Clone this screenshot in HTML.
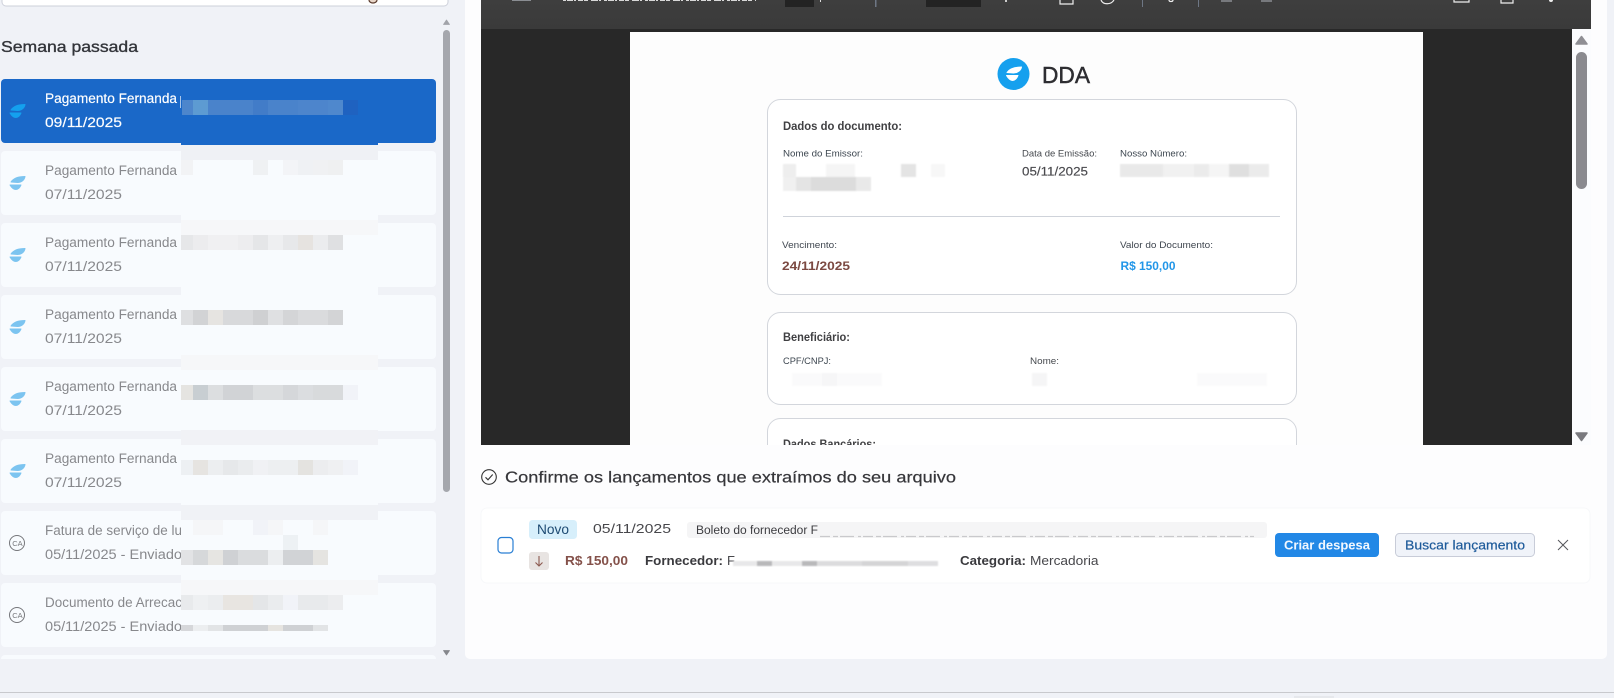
<!DOCTYPE html>
<html lang="pt-BR">
<head>
<meta charset="utf-8">
<title>DDA</title>
<style>
html,body{margin:0;padding:0;width:1614px;height:698px;overflow:hidden;background:#f0f2f7}
svg{display:block}
text{font-family:"Liberation Sans",sans-serif}
.t{font-size:13.5px;fill:#87888c}
</style>
</head>
<body>
<svg width="1614" height="698" viewBox="0 0 1614 698" xmlns="http://www.w3.org/2000/svg">
<defs>
<clipPath id="list"><rect x="0" y="60" width="440" height="599"/></clipPath>
<clipPath id="pdf"><rect x="630" y="32" width="793" height="413"/></clipPath>
<linearGradient id="tb" x1="0" x2="0" y1="0" y2="1"><stop offset="0" stop-color="#3e3e3e"/><stop offset="1" stop-color="#3a3a3a"/></linearGradient>
<filter id="s" x="-2%" y="-2%" width="104%" height="104%"><feGaussianBlur stdDeviation="0.35"/></filter>
<filter id="m" x="-5%" y="-20%" width="110%" height="140%"><feGaussianBlur stdDeviation="0.8"/></filter>
<path id="lu" d="M11 110C13 107 17 104.500 25 104.500C24.500 107.500 22 110.500 17.500 110.500Z" stroke-width="1" stroke-linejoin="round"/>
<path id="ld" d="M10 113H21C20 115.500 18.500 117.500 16 117.500C13.500 117.500 11.500 115.500 10 113Z" stroke-width="1" stroke-linejoin="round"/>
</defs>

<rect width="1614" height="698" fill="#f0f2f7"/>

<!-- search box -->
<rect x="2" y="-10" width="446" height="16" rx="4" fill="#fff" stroke="#cdd0da"/>
<path d="M369 0a4 3 0 0 0 8 0" fill="#e8d6c8" stroke="#5a3a2c" stroke-width="1.2"/>

<text x="1" y="52" font-size="16" fill="#33353a" stroke="#33353a" stroke-width=".35" textLength="137" lengthAdjust="spacingAndGlyphs">Semana passada</text>

<!-- list -->
<g clip-path="url(#list)">
<rect x="1" y="79" width="435" height="64" rx="4" fill="#1a68c8"/>
<rect x="1" y="151" width="435" height="64" rx="4" fill="#f8fbfe"/>
<rect x="1" y="223" width="435" height="64" rx="4" fill="#f8fbfe"/>
<rect x="1" y="295" width="435" height="64" rx="4" fill="#f8fbfe"/>
<rect x="1" y="367" width="435" height="64" rx="4" fill="#f8fbfe"/>
<rect x="1" y="439" width="435" height="64" rx="4" fill="#f8fbfe"/>
<rect x="1" y="511" width="435" height="64" rx="4" fill="#f8fbfe"/>
<rect x="1" y="583" width="435" height="64" rx="4" fill="#f8fbfe"/>
<rect x="1" y="655" width="435" height="64" rx="4" fill="#f8fbfe"/>

<!-- leaf icons -->
<g fill="#14a0ee" stroke="#14a0ee"><use href="#lu"/><use href="#ld"/></g>
<g fill="#7cc4f0" stroke="#7cc4f0">
<use href="#lu" y="72"/><use href="#ld" y="72"/>
<use href="#lu" y="144"/><use href="#ld" y="144"/>
<use href="#lu" y="216"/><use href="#ld" y="216"/>
<use href="#lu" y="288"/><use href="#ld" y="288"/>
<use href="#lu" y="360"/><use href="#ld" y="360"/>
</g>
<g fill="none" stroke="#76777b" stroke-width="1">
<circle cx="17" cy="543" r="7.500"/>
<circle cx="17" cy="615" r="7.500"/>
</g>
<text x="12.200" y="546" font-size="7.500" fill="#76777b">CA</text>
<text x="12.200" y="618" font-size="7.500" fill="#76777b">CA</text>

<!-- item text -->
<text x="45" y="103" font-size="13.500" fill="#fff" stroke="#fff" stroke-width=".15" textLength="132" lengthAdjust="spacingAndGlyphs">Pagamento Fernanda</text>
<text x="45" y="127" font-size="13.500" fill="#fff" stroke="#fff" stroke-width=".15" textLength="77" lengthAdjust="spacingAndGlyphs">09/11/2025</text>
<rect x="180" y="96" width="1" height="12" fill="#a9c6ea"/>
<text class="t" x="45" y="175" textLength="132" lengthAdjust="spacingAndGlyphs">Pagamento Fernanda</text>
<text class="t" x="45" y="199" textLength="77" lengthAdjust="spacingAndGlyphs">07/11/2025</text>
<text class="t" x="45" y="247" textLength="132" lengthAdjust="spacingAndGlyphs">Pagamento Fernanda</text>
<text class="t" x="45" y="271" textLength="77" lengthAdjust="spacingAndGlyphs">07/11/2025</text>
<text class="t" x="45" y="319" textLength="132" lengthAdjust="spacingAndGlyphs">Pagamento Fernanda</text>
<text class="t" x="45" y="343" textLength="77" lengthAdjust="spacingAndGlyphs">07/11/2025</text>
<text class="t" x="45" y="391" textLength="132" lengthAdjust="spacingAndGlyphs">Pagamento Fernanda</text>
<text class="t" x="45" y="415" textLength="77" lengthAdjust="spacingAndGlyphs">07/11/2025</text>
<text class="t" x="45" y="463" textLength="132" lengthAdjust="spacingAndGlyphs">Pagamento Fernanda</text>
<text class="t" x="45" y="487" textLength="77" lengthAdjust="spacingAndGlyphs">07/11/2025</text>
<text class="t" x="45" y="535" textLength="137" lengthAdjust="spacingAndGlyphs">Fatura de serviço de lu</text>
<text class="t" x="45" y="559" textLength="137" lengthAdjust="spacingAndGlyphs">05/11/2025 - Enviado</text>
<text class="t" x="45" y="607" textLength="137" lengthAdjust="spacingAndGlyphs">Documento de Arrecac</text>
<text class="t" x="45" y="631" textLength="137" lengthAdjust="spacingAndGlyphs">05/11/2025 - Enviado</text>

<!-- active item mosaic -->
<g shape-rendering="crispEdges">
<rect x="182" y="100" width="11" height="15" fill="#4d86cc"/>
<rect x="193" y="100" width="15" height="15" fill="#5d9bd2"/>
<rect x="208" y="100" width="45" height="15" fill="#4a83cb"/>
<rect x="253" y="100" width="15" height="15" fill="#427cc8"/>
<rect x="268" y="100" width="30" height="15" fill="#4a83cb"/>
<rect x="298" y="100" width="30" height="15" fill="#4d85cc"/>
<rect x="328" y="100" width="15" height="15" fill="#4f88cd"/>
<rect x="343" y="100" width="15" height="15" fill="#1f62c0"/>

<!-- privacy overlay -->
<rect x="181" y="143" width="197" height="2" fill="#1a68c8"/>
<rect x="181" y="145" width="197" height="450" fill="#f8fbfe"/>
<rect x="181" y="145" width="197" height="15" fill="#eff1f5"/>
<rect x="181" y="160" width="12" height="15" fill="#f2f3f5"/>
<rect x="253" y="160" width="15" height="15" fill="#eff1f3"/>
<rect x="283" y="160" width="15" height="15" fill="#f3f4f7"/>
<rect x="298" y="160" width="15" height="15" fill="#eff1f4"/>
<rect x="313" y="160" width="15" height="15" fill="#f0f1f3"/>
<rect x="328" y="160" width="15" height="15" fill="#eff0f1"/>
<rect x="181" y="220" width="197" height="15" fill="#f6f7f9"/>
<rect x="181" y="235" width="12" height="15" fill="#e6e7e9"/>
<rect x="193" y="235" width="15" height="15" fill="#ececee"/>
<rect x="208" y="235" width="30" height="15" fill="#f0f0f2"/>
<rect x="238" y="235" width="15" height="15" fill="#ededef"/>
<rect x="253" y="235" width="15" height="15" fill="#e5e6e8"/>
<rect x="268" y="235" width="15" height="15" fill="#eeeff1"/>
<rect x="283" y="235" width="15" height="15" fill="#e7e8ea"/>
<rect x="298" y="235" width="15" height="15" fill="#e6e3e0"/>
<rect x="313" y="235" width="15" height="15" fill="#ebecee"/>
<rect x="328" y="235" width="15" height="15" fill="#dfe0e2"/>
<rect x="181" y="310" width="12" height="15" fill="#dedfe1"/>
<rect x="193" y="310" width="15" height="15" fill="#d2d3d5"/>
<rect x="208" y="310" width="15" height="15" fill="#e6e4e1"/>
<rect x="223" y="310" width="30" height="15" fill="#d8d9db"/>
<rect x="253" y="310" width="15" height="15" fill="#cfd0d2"/>
<rect x="268" y="310" width="15" height="15" fill="#dfe0e2"/>
<rect x="283" y="310" width="15" height="15" fill="#d4d5d7"/>
<rect x="298" y="310" width="30" height="15" fill="#dadbdd"/>
<rect x="328" y="310" width="15" height="15" fill="#d3d4d6"/>
<rect x="181" y="355" width="197" height="15" fill="#f6f7f9"/>
<rect x="181" y="385" width="12" height="15" fill="#e5e4e1"/>
<rect x="193" y="385" width="15" height="15" fill="#c8ced2"/>
<rect x="208" y="385" width="15" height="15" fill="#dcdee0"/>
<rect x="223" y="385" width="30" height="15" fill="#d1d3d6"/>
<rect x="253" y="385" width="30" height="15" fill="#dcdee0"/>
<rect x="283" y="385" width="15" height="15" fill="#d5d7da"/>
<rect x="298" y="385" width="15" height="15" fill="#dbdde0"/>
<rect x="313" y="385" width="30" height="15" fill="#d8dadc"/>
<rect x="343" y="385" width="15" height="15" fill="#f1f3f8"/>
<rect x="181" y="430" width="197" height="15" fill="#f1f2f6"/>
<rect x="181" y="460" width="12" height="15" fill="#edf0f3"/>
<rect x="193" y="460" width="15" height="15" fill="#e6e4e1"/>
<rect x="208" y="460" width="15" height="15" fill="#eceef0"/>
<rect x="223" y="460" width="15" height="15" fill="#e6e8ea"/>
<rect x="238" y="460" width="15" height="15" fill="#eaecee"/>
<rect x="253" y="460" width="15" height="15" fill="#f0f1f4"/>
<rect x="268" y="460" width="30" height="15" fill="#edeff1"/>
<rect x="298" y="460" width="15" height="15" fill="#e4e3e0"/>
<rect x="313" y="460" width="15" height="15" fill="#ecedef"/>
<rect x="328" y="460" width="15" height="15" fill="#eff0f2"/>
<rect x="343" y="460" width="15" height="15" fill="#f1f3f8"/>
<rect x="181" y="505" width="197" height="15" fill="#f0f2f6"/>
<rect x="193" y="520" width="30" height="15" fill="#f5f6f8"/>
<rect x="253" y="520" width="15" height="15" fill="#f1f3f8"/>
<rect x="268" y="520" width="15" height="15" fill="#f5f6f8"/>
<rect x="313" y="520" width="15" height="15" fill="#f5f6f8"/>
<rect x="283" y="535" width="15" height="15" fill="#edf1f4"/>
<rect x="181" y="550" width="12" height="15" fill="#e2e3e5"/>
<rect x="193" y="550" width="15" height="15" fill="#d6d8da"/>
<rect x="208" y="550" width="15" height="15" fill="#e6e5e2"/>
<rect x="223" y="550" width="15" height="15" fill="#cfd1d4"/>
<rect x="238" y="550" width="30" height="15" fill="#dadcde"/>
<rect x="268" y="550" width="15" height="15" fill="#eceef0"/>
<rect x="283" y="550" width="30" height="15" fill="#d1d3d6"/>
<rect x="313" y="550" width="15" height="15" fill="#e5e4e1"/>
<rect x="181" y="580" width="197" height="15" fill="#f6f7f9"/>
<rect x="181" y="595" width="12" height="15" fill="#e8eaec"/>
<rect x="193" y="595" width="15" height="15" fill="#eef0f2"/>
<rect x="208" y="595" width="15" height="15" fill="#ebedef"/>
<rect x="223" y="595" width="30" height="15" fill="#e8e5e1"/>
<rect x="253" y="595" width="15" height="15" fill="#e4e6e8"/>
<rect x="268" y="595" width="15" height="15" fill="#eaecee"/>
<rect x="283" y="595" width="15" height="15" fill="#f1f3f8"/>
<rect x="298" y="595" width="30" height="15" fill="#e8eaec"/>
<rect x="328" y="595" width="15" height="15" fill="#ecedef"/>
<rect x="181" y="625" width="12" height="6" fill="#d6d7da"/>
<rect x="193" y="625" width="15" height="6" fill="#eceef0"/>
<rect x="208" y="625" width="15" height="6" fill="#e2e4e6"/>
<rect x="223" y="625" width="45" height="6" fill="#cfd1d4"/>
<rect x="268" y="625" width="15" height="6" fill="#e6e4e0"/>
<rect x="283" y="625" width="30" height="6" fill="#cfd1d4"/>
<rect x="313" y="625" width="15" height="6" fill="#e2e4e6"/>
</g>
</g>

<!-- sidebar scrollbar -->
<path d="M446.500 20L449.500 24.500H443.500Z" fill="#a2a4aa" stroke="#a2a4aa" stroke-width=".8" stroke-linejoin="round"/>
<rect x="443" y="30" width="7" height="462" rx="3.500" fill="#a5a7ad"/>
<path d="M443.500 650.500H449.500L446.500 655Z" fill="#85878c" stroke="#85878c" stroke-width=".8" stroke-linejoin="round"/>

<!-- main panel -->
<path d="M465 0H1607V654a5 5 0 0 1-5 5H470a5 5 0 0 1-5-5Z" fill="#fdfdfe"/>

<!-- PDF viewer -->
<rect x="481" y="0" width="1110" height="29" fill="url(#tb)"/>
<rect x="481" y="29" width="1091" height="416" fill="#282828"/>
<rect x="1572" y="29" width="19" height="416" fill="#fbfcfe"/>
<rect x="630" y="32" width="793" height="413" fill="#fdfdfd"/>

<!-- toolbar remnants -->
<path d="M563 .5H756" stroke="#d8d8d8" stroke-width="1" stroke-dasharray="3 1 6 1 2 2 5 1 4 3 7 1 2 3"/>
<g shape-rendering="crispEdges">
<rect x="512" y="0" width="19" height="1" fill="#8a8d92"/>
<rect x="785" y="0" width="29" height="7" fill="#232323"/>
<rect x="820" y="0" width="1" height="2" fill="#ddd"/>
<rect x="875" y="0" width="1.500" height="7" fill="#6e7785"/>
<rect x="926" y="0" width="55" height="7" fill="#232323"/>
<rect x="1005" y="0" width="2" height="2" fill="#ccc"/>
<rect x="1142" y="0" width="1" height="7" fill="#6e7785"/>
<rect x="1198" y="0" width="1" height="7" fill="#6e7785"/>
</g>
<g fill="none" stroke="#eee" stroke-width="1.200">
<path d="M1060 0V4H1073V0"/>
<path d="M1101 0C1103 5 1111 5 1114 0"/>
<path d="M1169 0C1169 2 1173 2 1173 0"/>
<path d="M1454 0V2H1469V0"/>
<path d="M1501 0V3H1513V0"/>
</g>
<rect x="1221" y="0" width="11" height="2" fill="#77797d"/>
<rect x="1261" y="0" width="11" height="2" fill="#77797d"/>
<circle cx="1551" cy="0" r="2" fill="#eee"/>

<!-- pdf scrollbar -->
<path d="M1581.500 36.500L1587 44H1576Z" fill="#8f8f94" stroke="#8f8f94" stroke-width="1.500" stroke-linejoin="round"/>
<rect x="1576" y="52" width="11" height="137" rx="5.500" fill="#8a8a8f"/>
<path d="M1576 433H1587L1581.500 440.500Z" fill="#7a7a7f" stroke="#7a7a7f" stroke-width="1.500" stroke-linejoin="round"/>

<!-- PDF content -->
<g clip-path="url(#pdf)">
<g filter="url(#s)">
<circle cx="1013.500" cy="74" r="16" fill="#14a0ee"/>
<path d="M1007 72.500C1009 69.500 1013 67.200 1021.500 67C1021 70 1018 73 1013.500 73Z" fill="#fff" stroke="#fff" stroke-linejoin="round"/>
<path d="M1006.500 75.500H1018C1017 78 1015.500 80.500 1012.500 80.500C1010 80.500 1008 78 1006.500 75.500Z" fill="#fff" stroke="#fff" stroke-linejoin="round"/>
<text x="1042" y="83" font-size="23" fill="#2d2d30" stroke="#2d2d30" stroke-width=".45" textLength="48" lengthAdjust="spacingAndGlyphs">DDA</text>

<rect x="767.500" y="99.500" width="529" height="195" rx="13" fill="#fff" stroke="#d3d6dc" stroke-width="1"/>
<text x="783" y="130" font-size="11.500" font-weight="700" fill="#3f3f43" textLength="119" lengthAdjust="spacingAndGlyphs">Dados do documento:</text>
<text x="783" y="156.500" font-size="9.500" fill="#3d4650" textLength="80" lengthAdjust="spacingAndGlyphs">Nome do Emissor:</text>
<text x="1022" y="156.500" font-size="9.500" fill="#45484e" textLength="75" lengthAdjust="spacingAndGlyphs">Data de Emissão:</text>
<text x="1120" y="156.500" font-size="9.500" fill="#3d4650" textLength="67" lengthAdjust="spacingAndGlyphs">Nosso Número:</text>
<text x="1022" y="175.500" font-size="11.500" fill="#4a4a4e" stroke="#4a4a4e" stroke-width=".15" textLength="66" lengthAdjust="spacingAndGlyphs">05/11/2025</text>

<rect x="783" y="216" width="497" height="1" fill="#cfd3da"/>
<text x="782" y="248" font-size="9.500" fill="#3f4650" textLength="55" lengthAdjust="spacingAndGlyphs">Vencimento:</text>
<text x="1120" y="248" font-size="9.500" fill="#3f4650" textLength="93" lengthAdjust="spacingAndGlyphs">Valor do Documento:</text>
<text x="782" y="270" font-size="11.500" font-weight="700" fill="#7b4a42" textLength="68" lengthAdjust="spacingAndGlyphs">24/11/2025</text>
<text x="1120.500" y="270" font-size="11.500" font-weight="700" fill="#2196e8" textLength="55" lengthAdjust="spacingAndGlyphs">R$ 150,00</text>

<rect x="767.500" y="312.500" width="529" height="92" rx="13" fill="#fff" stroke="#d3d6dc" stroke-width="1"/>
<text x="783" y="341" font-size="11.500" font-weight="700" fill="#3f3f43" textLength="67" lengthAdjust="spacingAndGlyphs">Beneficiário:</text>
<text x="783" y="364" font-size="9.500" fill="#3d4650" textLength="48" lengthAdjust="spacingAndGlyphs">CPF/CNPJ:</text>
<text x="1030" y="364" font-size="9.500" fill="#45484e" textLength="29" lengthAdjust="spacingAndGlyphs">Nome:</text>

<rect x="767.500" y="418.500" width="529" height="60" rx="13" fill="#fff" stroke="#d3d6dc" stroke-width="1"/>
<text x="783" y="448" font-size="11.500" font-weight="700" fill="#3f3f43" textLength="93" lengthAdjust="spacingAndGlyphs">Dados Bancários:</text>
</g>
<g filter="url(#m)">
<rect x="783" y="164" width="13" height="13" fill="#eeeeee"/>
<rect x="826" y="164" width="29" height="13" fill="#f5f5f5"/>
<rect x="901" y="164" width="15" height="13" fill="#e4e4e4"/>
<rect x="931" y="164" width="14" height="13" fill="#f7f7f7"/>
<rect x="783" y="177" width="13" height="14" fill="#f0f0f0"/>
<rect x="796" y="177" width="15" height="14" fill="#e4e4e4"/>
<rect x="811" y="177" width="45" height="14" fill="#dcdcdc"/>
<rect x="856" y="177" width="15" height="14" fill="#e9e9e9"/>
<rect x="1120" y="164" width="43" height="13" fill="#e9e9e9"/>
<rect x="1163" y="164" width="31" height="13" fill="#f1f1f1"/>
<rect x="1194" y="164" width="15" height="13" fill="#ebebeb"/>
<rect x="1209" y="164" width="20" height="13" fill="#f5f5f5"/>
<rect x="1229" y="164" width="20" height="13" fill="#dfdfdf"/>
<rect x="1249" y="164" width="20" height="13" fill="#ebebeb"/>
<rect x="792" y="373" width="30" height="13" fill="#fafafb"/>
<rect x="822" y="373" width="15" height="13" fill="#f6f6f7"/>
<rect x="837" y="373" width="45" height="13" fill="#fafafb"/>
<rect x="1032" y="373" width="15" height="13" fill="#f5f5f6"/>
<rect x="1197" y="373" width="70" height="13" fill="#fafafb"/>
</g>
</g>

<!-- heading -->
<circle cx="489" cy="477" r="7.300" fill="none" stroke="#333" stroke-width="1.100"/>
<path d="M485.500 477.300L488 479.800L492.700 474.500" fill="none" stroke="#333" stroke-width="1.100"/>
<text x="505" y="482.500" font-size="16" fill="#36363a" stroke="#36363a" stroke-width=".2" textLength="451" lengthAdjust="spacingAndGlyphs">Confirme os lançamentos que extraímos do seu arquivo</text>

<!-- row card -->
<rect x="481" y="508" width="1109" height="75" rx="6" fill="#fff" stroke="#f7f8fa"/>
<rect x="498" y="537.500" width="15" height="15.500" rx="3.500" fill="#fff" stroke="#2a7fd4" stroke-width="1.200"/>

<rect x="529" y="520" width="48" height="19" rx="3.500" fill="#d7effb"/>
<text x="537" y="534" font-size="13.500" fill="#1d4a72" textLength="32" lengthAdjust="spacingAndGlyphs">Novo</text>
<text x="593" y="533" font-size="13" fill="#47474b" textLength="78" lengthAdjust="spacingAndGlyphs">05/11/2025</text>

<rect x="687" y="522" width="580" height="16" rx="3" fill="#f5f5f6"/>
<text x="696" y="534" font-size="11.500" fill="#3c3c40" textLength="122" lengthAdjust="spacingAndGlyphs">Boleto do fornecedor F</text>
<path d="M820 536.500H1254" stroke="#c9c9cc" stroke-width="1.200" stroke-dasharray="10 3 5 2 14 4 3 2"/>

<rect x="529" y="552" width="20" height="18" rx="3" fill="#e8e4e2"/>
<path d="M539 556V566M535.500 562.500L539 566L542.500 562.500" fill="none" stroke="#8c5a50" stroke-width="1.100"/>
<text x="565" y="565" font-size="13" font-weight="700" fill="#84514a" textLength="63" lengthAdjust="spacingAndGlyphs">R$ 150,00</text>
<text x="645" y="565" font-size="13" font-weight="700" fill="#3a3a3e" textLength="78" lengthAdjust="spacingAndGlyphs">Fornecedor:</text>
<text x="727" y="565" font-size="13" fill="#47474b">F</text>
<g filter="url(#m)">
<rect x="733" y="561" width="24" height="5" fill="#e8e8e9"/>
<rect x="757" y="561" width="15" height="5" fill="#b8b8ba"/>
<rect x="772" y="561" width="30" height="5" fill="#e8e8e9"/>
<rect x="802" y="561" width="15" height="5" fill="#b8b8ba"/>
<rect x="817" y="561" width="45" height="5" fill="#dcdcdd"/>
<rect x="862" y="561" width="46" height="5" fill="#d4d4d6"/>
<rect x="908" y="561" width="30" height="5" fill="#dedee0"/>
</g>
<text x="960" y="565" font-size="13" font-weight="700" fill="#3a3a3e" textLength="66" lengthAdjust="spacingAndGlyphs">Categoria:</text>
<text x="1030" y="565" font-size="13" fill="#47474b" textLength="68.500" lengthAdjust="spacingAndGlyphs">Mercadoria</text>

<!-- buttons -->
<rect x="1275" y="533" width="104" height="24" rx="4" fill="#2288e6"/>
<text x="1284" y="549.500" font-size="13" font-weight="700" fill="#f2f8ff" textLength="86" lengthAdjust="spacingAndGlyphs">Criar despesa</text>
<rect x="1395.500" y="533.500" width="139" height="23" rx="4" fill="#f0f3f9" stroke="#c8ccd8"/>
<text x="1405" y="549.500" font-size="13" fill="#1d5a9a" stroke="#1d5a9a" stroke-width=".2" textLength="120" lengthAdjust="spacingAndGlyphs">Buscar lançamento</text>
<path d="M1558 540L1568 550M1568 540L1558 550" stroke="#55565a" stroke-width="1"/>

<!-- footer -->
<rect x="0" y="692" width="1614" height="1" fill="#c8c9cd"/>
<rect x="1294" y="696" width="40" height="2" fill="#e6e8ec"/>
</svg>
</body>
</html>
